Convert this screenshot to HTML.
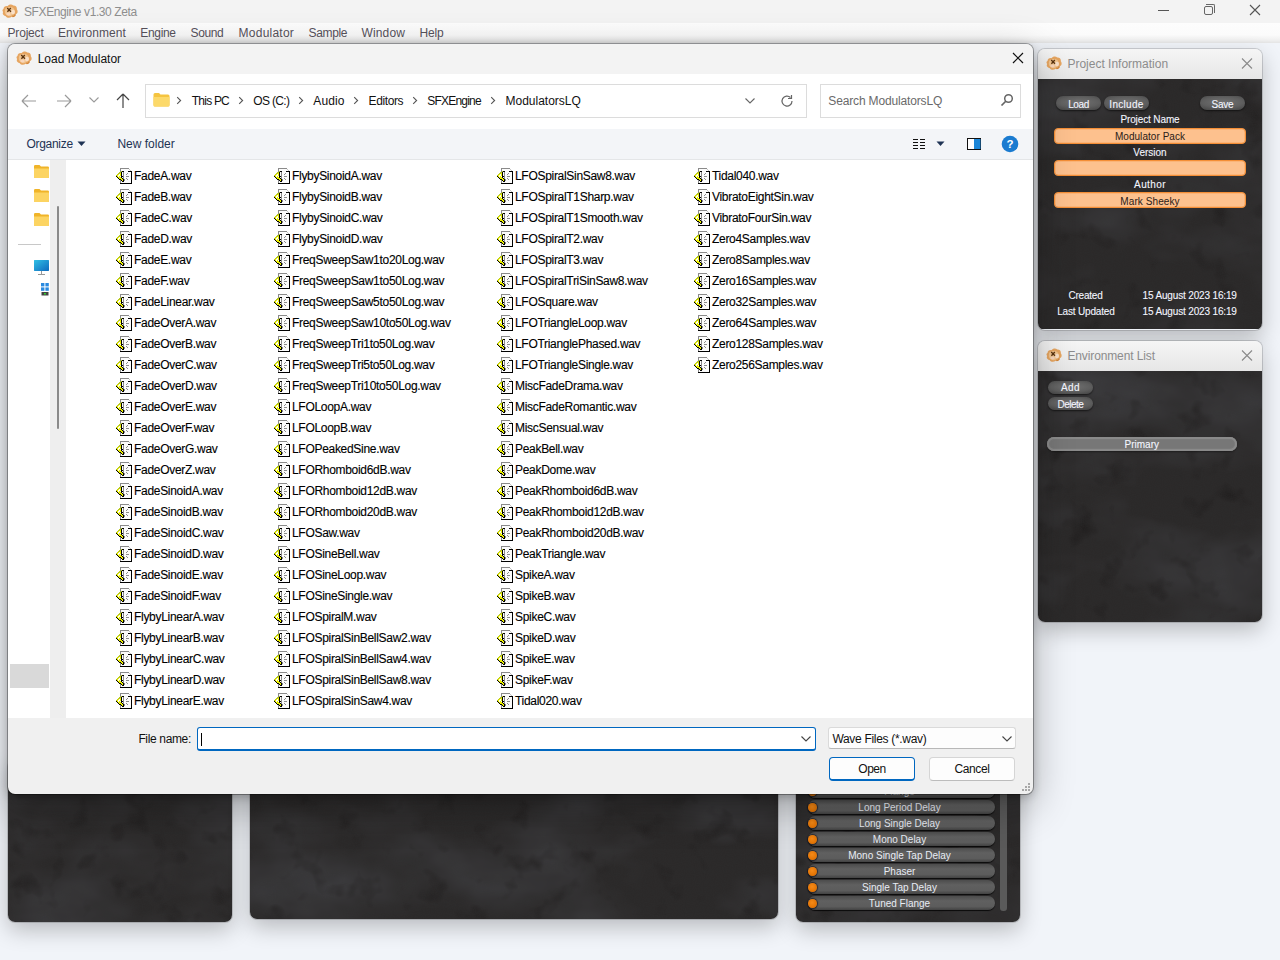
<!DOCTYPE html>
<html><head><meta charset="utf-8">
<style>
*{margin:0;padding:0;box-sizing:border-box}
html,body{width:1280px;height:960px;overflow:hidden}
body{position:relative;background:#f1f4f9;font-family:"Liberation Sans",sans-serif;}
.a{position:absolute}
.t{position:absolute;white-space:nowrap;line-height:1}
#tb{left:0;top:0;width:1280px;height:23px;background:#f3f3f3}
#mb{left:0;top:23px;width:1280px;height:20px;background:linear-gradient(#fdfdfd,#fbfbfb 60%,#f0f0f0 85%,#e4e4e4)}
.menu{font-size:12px;color:#57525c;top:27px}
.marble{background:
 radial-gradient(ellipse 60% 40% at 30% 70%, rgba(80,80,85,.35), transparent 70%),
 radial-gradient(ellipse 50% 30% at 70% 30%, rgba(70,70,72,.3), transparent 70%),
 radial-gradient(ellipse 40% 50% at 85% 80%, rgba(60,60,62,.3), transparent 70%),
 linear-gradient(160deg,#262424,#2c2b2b 40%,#333334 60%,#2a2828);}
.panel{position:absolute;border-radius:7px;overflow:hidden;box-shadow:0 8px 22px rgba(0,0,0,.24),0 0 0 1px rgba(0,0,0,.15)}
.phead{position:absolute;left:0;top:0;right:0;height:30px;background:linear-gradient(#f5f5f5,#e6e6e6)}
.pbody{position:absolute;left:0;top:30px;right:0;bottom:0}
.ptitle{font-size:12px;color:#8c8c8c}
.gbtn{position:absolute;border-radius:8px;background:radial-gradient(ellipse 75% 65% at 50% 45%,#727272,#5e5e5e 60%,#464646);box-shadow:0 1px 2px rgba(0,0,0,.6)}
.wl{position:absolute;white-space:nowrap;line-height:1;color:#f4f6ff;font-size:10px;-webkit-text-stroke:0.1px #f4f6ff}
.ofield{position:absolute;height:16px;border-radius:4px;background:#fdc18e;border:1px solid #f48e36;box-shadow:inset 0 0 0 0.5px #f9a860}
.dk{position:absolute;white-space:nowrap;line-height:1;color:#2a2018;font-size:10px}
.crumb{top:95px;font-size:12px;color:#111}
.chev{position:absolute}
.fxrow{position:absolute;left:805px;width:192px;height:16px}
.fxdot{position:absolute;left:2.5px;top:4px;width:9px;height:9px;border-radius:50%;background:radial-gradient(circle at 45% 40%,#f58a18,#e07000 75%,#5a3000);box-shadow:0 0 1px 1px rgba(20,20,30,.7)}
.fxpill{position:absolute;left:3px;top:1px;width:187px;height:14px;border-radius:7px;background:linear-gradient(#4c4c4c,#606060 35%,#5c5c5c 75%,#424242);box-shadow:0 1px 1px rgba(0,0,0,.8)}
.fxt{position:absolute;left:1px;width:187px;top:4px;text-align:center;white-space:nowrap;line-height:1;color:#e8ecf4;font-size:10px}
.fi{position:absolute;height:21px;font-size:12px;color:#000;white-space:nowrap;-webkit-text-stroke:0.12px #000}
.fi svg{position:absolute;left:0;top:2px;width:16px;height:16px}
.fi span{position:absolute;left:18px;top:4px;line-height:1;letter-spacing:-0.3px}
</style></head><body>
<svg width="0" height="0" style="position:absolute">
 <defs>
  <symbol id="wav" viewBox="0 0 16 16" shape-rendering="crispEdges"><rect x="4" y="0" width="9" height="1" fill="#8a8a8a"/><rect x="4" y="1" width="1" height="1" fill="#8a8a8a"/><rect x="5" y="1" width="8" height="1" fill="#fcfcfc"/><rect x="13" y="1" width="1" height="1" fill="#c4c4c4"/><rect x="4" y="2" width="1" height="1" fill="#8a8a8a"/><rect x="5" y="2" width="9" height="1" fill="#fcfcfc"/><rect x="14" y="2" width="1" height="1" fill="#c4c4c4"/><rect x="4" y="3" width="1" height="1" fill="#8a8a8a"/><rect x="5" y="3" width="1" height="1" fill="#b8c820"/><rect x="6" y="3" width="2" height="1" fill="#000"/><rect x="8" y="3" width="4" height="1" fill="#fcfcfc"/><rect x="12" y="3" width="4" height="1" fill="#000"/><rect x="3" y="4" width="2" height="1" fill="#b8c820"/><rect x="5" y="4" width="1" height="1" fill="#000"/><rect x="6" y="4" width="1" height="1" fill="#fcfcfc"/><rect x="7" y="4" width="1" height="1" fill="#8a8a8a"/><rect x="8" y="4" width="7" height="1" fill="#fcfcfc"/><rect x="15" y="4" width="1" height="1" fill="#000"/><rect x="2" y="5" width="2" height="1" fill="#b8c820"/><rect x="4" y="5" width="1" height="1" fill="#ecf000"/><rect x="5" y="5" width="1" height="1" fill="#000"/><rect x="6" y="5" width="1" height="1" fill="#fcfcfc"/><rect x="7" y="5" width="1" height="1" fill="#8a8a8a"/><rect x="8" y="5" width="3" height="1" fill="#fcfcfc"/><rect x="11" y="5" width="1" height="1" fill="#8a8a8a"/><rect x="12" y="5" width="3" height="1" fill="#fcfcfc"/><rect x="15" y="5" width="1" height="1" fill="#000"/><rect x="1" y="6" width="1" height="1" fill="#b8c820"/><rect x="2" y="6" width="1" height="1" fill="#ecf000"/><rect x="3" y="6" width="1" height="1" fill="#fcfcfc"/><rect x="4" y="6" width="1" height="1" fill="#ecf000"/><rect x="5" y="6" width="1" height="1" fill="#000"/><rect x="6" y="6" width="1" height="1" fill="#fcfcfc"/><rect x="7" y="6" width="1" height="1" fill="#8a8a8a"/><rect x="8" y="6" width="2" height="1" fill="#fcfcfc"/><rect x="10" y="6" width="1" height="1" fill="#8a8a8a"/><rect x="11" y="6" width="4" height="1" fill="#fcfcfc"/><rect x="15" y="6" width="1" height="1" fill="#000"/><rect x="0" y="7" width="1" height="1" fill="#b8c820"/><rect x="1" y="7" width="1" height="1" fill="#ecf000"/><rect x="2" y="7" width="2" height="1" fill="#fcfcfc"/><rect x="4" y="7" width="1" height="1" fill="#ecf000"/><rect x="5" y="7" width="1" height="1" fill="#000"/><rect x="6" y="7" width="1" height="1" fill="#fcfcfc"/><rect x="7" y="7" width="1" height="1" fill="#8a8a8a"/><rect x="8" y="7" width="7" height="1" fill="#fcfcfc"/><rect x="15" y="7" width="1" height="1" fill="#000"/><rect x="0" y="8" width="1" height="1" fill="#000"/><rect x="1" y="8" width="1" height="1" fill="#ecf000"/><rect x="2" y="8" width="1" height="1" fill="#fcfcfc"/><rect x="3" y="8" width="1" height="1" fill="#ecf000"/><rect x="4" y="8" width="1" height="1" fill="#fcfcfc"/><rect x="5" y="8" width="2" height="1" fill="#000"/><rect x="7" y="8" width="1" height="1" fill="#8a8a8a"/><rect x="8" y="8" width="2" height="1" fill="#fcfcfc"/><rect x="10" y="8" width="3" height="1" fill="#8a8a8a"/><rect x="13" y="8" width="2" height="1" fill="#fcfcfc"/><rect x="15" y="8" width="1" height="1" fill="#000"/><rect x="1" y="9" width="1" height="1" fill="#000"/><rect x="2" y="9" width="3" height="1" fill="#ecf000"/><rect x="5" y="9" width="1" height="1" fill="#000"/><rect x="6" y="9" width="1" height="1" fill="#fcfcfc"/><rect x="7" y="9" width="1" height="1" fill="#8a8a8a"/><rect x="8" y="9" width="7" height="1" fill="#fcfcfc"/><rect x="15" y="9" width="1" height="1" fill="#000"/><rect x="2" y="10" width="1" height="1" fill="#000"/><rect x="3" y="10" width="3" height="1" fill="#ecf000"/><rect x="6" y="10" width="1" height="1" fill="#000"/><rect x="7" y="10" width="1" height="1" fill="#8a8a8a"/><rect x="8" y="10" width="2" height="1" fill="#fcfcfc"/><rect x="10" y="10" width="1" height="1" fill="#8a8a8a"/><rect x="11" y="10" width="4" height="1" fill="#fcfcfc"/><rect x="15" y="10" width="1" height="1" fill="#000"/><rect x="3" y="11" width="2" height="1" fill="#000"/><rect x="5" y="11" width="2" height="1" fill="#ecf000"/><rect x="7" y="11" width="1" height="1" fill="#000"/><rect x="8" y="11" width="1" height="1" fill="#8a8a8a"/><rect x="9" y="11" width="2" height="1" fill="#fcfcfc"/><rect x="11" y="11" width="1" height="1" fill="#8a8a8a"/><rect x="12" y="11" width="3" height="1" fill="#fcfcfc"/><rect x="15" y="11" width="1" height="1" fill="#000"/><rect x="4" y="12" width="1" height="1" fill="#8a8a8a"/><rect x="5" y="12" width="1" height="1" fill="#000"/><rect x="6" y="12" width="1" height="1" fill="#ecf000"/><rect x="7" y="12" width="1" height="1" fill="#000"/><rect x="8" y="12" width="1" height="1" fill="#8a8a8a"/><rect x="9" y="12" width="6" height="1" fill="#fcfcfc"/><rect x="15" y="12" width="1" height="1" fill="#000"/><rect x="4" y="13" width="1" height="1" fill="#8a8a8a"/><rect x="5" y="13" width="1" height="1" fill="#fcfcfc"/><rect x="6" y="13" width="2" height="1" fill="#000"/><rect x="8" y="13" width="7" height="1" fill="#fcfcfc"/><rect x="15" y="13" width="1" height="1" fill="#000"/><rect x="4" y="14" width="1" height="1" fill="#8a8a8a"/><rect x="5" y="14" width="10" height="1" fill="#fcfcfc"/><rect x="15" y="14" width="1" height="1" fill="#000"/><rect x="4" y="15" width="12" height="1" fill="#000"/></symbol>
  <symbol id="logo" viewBox="0 0 16 14">
   <path d="M1.5 5C1.5 3 3.5 1.8 5.5 2.2C6.8 0.2 10 0 11.2 1.6C13.2 1.2 15.2 2.8 14.8 5.2C16.2 6.8 15.8 9.5 13.8 10.2C13.8 12.6 11.2 13.8 9.6 12.8C8 14.2 4.8 14.2 3.8 12.2C1.2 12 0 9.5 1.2 8C0 6.8 0.5 5.5 1.5 5Z" fill="#e6a560"/>
   <path d="M3 6C3 4 5 3 7 3.2C9 2.5 12 3.5 12.5 6C13.5 8 12.5 10.5 10.5 11C9 12.5 6 12.5 4.5 11C3 10 2.5 8 3 6Z" fill="#f2c590"/>
   <ellipse cx="11" cy="8" rx="2" ry="2.2" fill="#f9e0c8"/>
   <ellipse cx="6.5" cy="10" rx="2.2" ry="1.4" fill="#f8d6bc"/>
   <path d="M13 10.5C13.5 11.5 12 12.8 10.5 12.3" stroke="#c87a30" stroke-width="1" fill="none"/>
   <path d="M5.2 4L9 7.8M8.8 4L5.4 7.8" stroke="#5a3410" stroke-width="1.3"/>
  </symbol>
  <symbol id="fold" viewBox="0 0 15 13"><path d="M0 1.2Q0 0 1.2 0H5.5L7 1.5H13.8Q15 1.5 15 2.7V11.8Q15 13 13.8 13H1.2Q0 13 0 11.8Z" fill="#f0b429"/><path d="M0 3.5H15V11.8Q15 13 13.8 13H1.2Q0 13 0 11.8Z" fill="#fcd462"/></symbol>
  <linearGradient id="mon" x1="0" y1="0" x2="1" y2="1"><stop offset="0" stop-color="#35c8e8" stop-opacity=".8"/><stop offset="1" stop-color="#0a5cb8" stop-opacity=".8"/></linearGradient>
  <symbol id="chev" viewBox="0 0 6 9"><path d="M1.2 1.2L4.6 4.5L1.2 7.8" fill="none" stroke="#555" stroke-width="1.1"/></symbol>
  <filter id="mf1" x="0" y="0" width="100%" height="100%" color-interpolation-filters="sRGB">
   <feTurbulence type="fractalNoise" baseFrequency="0.008 0.013" numOctaves="4" seed="1" result="n"/>
   <feColorMatrix in="n" type="matrix" values="0 0 0 0 0.26  0 0 0 0 0.26  0 0 0 0 0.275  1.5 0 0 0 -0.62" result="c"/>
   <feTurbulence type="fractalNoise" baseFrequency="0.035" numOctaves="3" seed="4" result="n2"/>
   <feColorMatrix in="n2" type="matrix" values="0 0 0 0 0.11  0 0 0 0 0.10  0 0 0 0 0.10  -2.0 0 0 0 0.85" result="c2"/>
   <feTurbulence type="fractalNoise" baseFrequency="0.9" numOctaves="1" seed="2" result="g"/>
   <feColorMatrix in="g" type="matrix" values="0 0 0 0 0.2  0 0 0 0 0.2  0 0 0 0 0.2  0 0 0 0.4 -0.05" result="gc"/>
   <feFlood flood-color="#2a2828" result="base"/>
   <feComposite in="c" in2="base" operator="over" result="m1"/>
   <feComposite in="c2" in2="m1" operator="over" result="m2"/>
   <feComposite in="gc" in2="m2" operator="over"/>
  </filter>
  <filter id="mf2" x="0" y="0" width="100%" height="100%" color-interpolation-filters="sRGB">
   <feTurbulence type="fractalNoise" baseFrequency="0.008 0.013" numOctaves="4" seed="2" result="n"/>
   <feColorMatrix in="n" type="matrix" values="0 0 0 0 0.26  0 0 0 0 0.26  0 0 0 0 0.275  1.5 0 0 0 -0.62" result="c"/>
   <feTurbulence type="fractalNoise" baseFrequency="0.035" numOctaves="3" seed="7" result="n2"/>
   <feColorMatrix in="n2" type="matrix" values="0 0 0 0 0.11  0 0 0 0 0.10  0 0 0 0 0.10  -2.0 0 0 0 0.85" result="c2"/>
   <feTurbulence type="fractalNoise" baseFrequency="0.9" numOctaves="1" seed="2" result="g"/>
   <feColorMatrix in="g" type="matrix" values="0 0 0 0 0.2  0 0 0 0 0.2  0 0 0 0 0.2  0 0 0 0.4 -0.05" result="gc"/>
   <feFlood flood-color="#2a2828" result="base"/>
   <feComposite in="c" in2="base" operator="over" result="m1"/>
   <feComposite in="c2" in2="m1" operator="over" result="m2"/>
   <feComposite in="gc" in2="m2" operator="over"/>
  </filter>
  <filter id="mf3" x="0" y="0" width="100%" height="100%" color-interpolation-filters="sRGB">
   <feTurbulence type="fractalNoise" baseFrequency="0.008 0.013" numOctaves="4" seed="3" result="n"/>
   <feColorMatrix in="n" type="matrix" values="0 0 0 0 0.26  0 0 0 0 0.26  0 0 0 0 0.275  1.5 0 0 0 -0.62" result="c"/>
   <feTurbulence type="fractalNoise" baseFrequency="0.035" numOctaves="3" seed="10" result="n2"/>
   <feColorMatrix in="n2" type="matrix" values="0 0 0 0 0.11  0 0 0 0 0.10  0 0 0 0 0.10  -2.0 0 0 0 0.85" result="c2"/>
   <feTurbulence type="fractalNoise" baseFrequency="0.9" numOctaves="1" seed="2" result="g"/>
   <feColorMatrix in="g" type="matrix" values="0 0 0 0 0.2  0 0 0 0 0.2  0 0 0 0 0.2  0 0 0 0.4 -0.05" result="gc"/>
   <feFlood flood-color="#2a2828" result="base"/>
   <feComposite in="c" in2="base" operator="over" result="m1"/>
   <feComposite in="c2" in2="m1" operator="over" result="m2"/>
   <feComposite in="gc" in2="m2" operator="over"/>
  </filter>
  <filter id="mf4" x="0" y="0" width="100%" height="100%" color-interpolation-filters="sRGB">
   <feTurbulence type="fractalNoise" baseFrequency="0.008 0.013" numOctaves="4" seed="4" result="n"/>
   <feColorMatrix in="n" type="matrix" values="0 0 0 0 0.26  0 0 0 0 0.26  0 0 0 0 0.275  1.5 0 0 0 -0.62" result="c"/>
   <feTurbulence type="fractalNoise" baseFrequency="0.035" numOctaves="3" seed="13" result="n2"/>
   <feColorMatrix in="n2" type="matrix" values="0 0 0 0 0.11  0 0 0 0 0.10  0 0 0 0 0.10  -2.0 0 0 0 0.85" result="c2"/>
   <feTurbulence type="fractalNoise" baseFrequency="0.9" numOctaves="1" seed="2" result="g"/>
   <feColorMatrix in="g" type="matrix" values="0 0 0 0 0.2  0 0 0 0 0.2  0 0 0 0 0.2  0 0 0 0.4 -0.05" result="gc"/>
   <feFlood flood-color="#2a2828" result="base"/>
   <feComposite in="c" in2="base" operator="over" result="m1"/>
   <feComposite in="c2" in2="m1" operator="over" result="m2"/>
   <feComposite in="gc" in2="m2" operator="over"/>
  </filter>
  <filter id="mf5" x="0" y="0" width="100%" height="100%" color-interpolation-filters="sRGB">
   <feTurbulence type="fractalNoise" baseFrequency="0.008 0.013" numOctaves="4" seed="5" result="n"/>
   <feColorMatrix in="n" type="matrix" values="0 0 0 0 0.26  0 0 0 0 0.26  0 0 0 0 0.275  1.5 0 0 0 -0.62" result="c"/>
   <feTurbulence type="fractalNoise" baseFrequency="0.035" numOctaves="3" seed="16" result="n2"/>
   <feColorMatrix in="n2" type="matrix" values="0 0 0 0 0.11  0 0 0 0 0.10  0 0 0 0 0.10  -2.0 0 0 0 0.85" result="c2"/>
   <feTurbulence type="fractalNoise" baseFrequency="0.9" numOctaves="1" seed="2" result="g"/>
   <feColorMatrix in="g" type="matrix" values="0 0 0 0 0.2  0 0 0 0 0.2  0 0 0 0 0.2  0 0 0 0.4 -0.05" result="gc"/>
   <feFlood flood-color="#2a2828" result="base"/>
   <feComposite in="c" in2="base" operator="over" result="m1"/>
   <feComposite in="c2" in2="m1" operator="over" result="m2"/>
   <feComposite in="gc" in2="m2" operator="over"/>
  </filter>
 </defs>
</svg>
<div id="tb" class="a"></div>
<svg class="a" style="left:2px;top:4px;width:16px;height:14px"><use href="#logo"/></svg>
<div class="t" style="left:24px;top:5.8px;font-size:12px;color:#8e8e8e;letter-spacing:-0.4px">SFXEngine v1.30 Zeta</div>
<div class="a" style="left:1158px;top:10px;width:11px;height:1px;background:#555"></div>
<div class="a" style="left:1204px;top:6px;width:9px;height:9px;border:1px solid #666;border-radius:2px"></div>
<div class="a" style="left:1206px;top:4px;width:9px;height:9px;border-top:1px solid #666;border-right:1px solid #666;border-radius:0 2px 0 0"></div>
<svg class="a" style="left:1249px;top:4px;width:12px;height:12px"><path d="M1 1L11 11M11 1L1 11" stroke="#555" stroke-width="1.1"/></svg>
<div id="mb" class="a"></div>
<div class="t menu" style="left:7.5px;top:27.0px;letter-spacing:-0.18px">Project</div>
<div class="t menu" style="left:58px;top:27.0px;letter-spacing:0.04px">Environment</div>
<div class="t menu" style="left:140.3px;top:27.0px;letter-spacing:-0.33px">Engine</div>
<div class="t menu" style="left:190.5px;top:27.0px;letter-spacing:-0.36px">Sound</div>
<div class="t menu" style="left:238.6px;top:27.0px;letter-spacing:0.23px">Modulator</div>
<div class="t menu" style="left:308.6px;top:27.0px;letter-spacing:-0.38px">Sample</div>
<div class="t menu" style="left:361.6px;top:27.0px;letter-spacing:0.12px">Window</div>
<div class="t menu" style="left:419.5px;top:27.0px;letter-spacing:-0.2px">Help</div>
<div class="panel" style="left:8px;top:760px;width:224px;height:162px"><svg width="224" height="162" style="position:absolute;left:0;top:0;display:block"><rect width="224" height="162" filter="url(#mf1)"/></svg></div>
<div class="panel" style="left:250px;top:760px;width:528px;height:159px"><svg width="528" height="159" style="position:absolute;left:0;top:0;display:block"><rect width="528" height="159" filter="url(#mf2)"/></svg></div>
<div class="panel" style="left:796px;top:760px;width:224px;height:162px"><svg width="224" height="162" style="position:absolute;left:0;top:0;display:block"><rect width="224" height="162" filter="url(#mf3)"/></svg></div>
<div class="fxrow" style="top:783px"><div class="fxpill"></div><div class="fxdot"></div><div class="fxt">Flange</div></div>
<div class="fxrow" style="top:799px"><div class="fxpill"></div><div class="fxdot"></div><div class="fxt">Long Period Delay</div></div>
<div class="fxrow" style="top:815px"><div class="fxpill"></div><div class="fxdot"></div><div class="fxt">Long Single Delay</div></div>
<div class="fxrow" style="top:831px"><div class="fxpill"></div><div class="fxdot"></div><div class="fxt">Mono Delay</div></div>
<div class="fxrow" style="top:847px"><div class="fxpill"></div><div class="fxdot"></div><div class="fxt">Mono Single Tap Delay</div></div>
<div class="fxrow" style="top:863px"><div class="fxpill"></div><div class="fxdot"></div><div class="fxt">Phaser</div></div>
<div class="fxrow" style="top:879px"><div class="fxpill"></div><div class="fxdot"></div><div class="fxt">Single Tap Delay</div></div>
<div class="fxrow" style="top:895px"><div class="fxpill"></div><div class="fxdot"></div><div class="fxt">Tuned Flange</div></div>
<div class="a" style="left:1000px;top:790px;width:7px;height:121px;background:#5a5a5a;border-radius:3px"></div>
<div class="panel" style="left:1038px;top:49px;width:224px;height:281px"><div class="phead"></div><div class="pbody"><svg width="224" height="250" style="position:absolute;left:0;top:0;display:block"><rect width="224" height="250" filter="url(#mf4)"/></svg></div></div>
<svg class="a" style="left:1046px;top:56px;width:16px;height:14px"><use href="#logo"/></svg>
<div class="t ptitle" style="left:1067.4px;top:57.7px">Project Information</div>
<svg class="a" style="left:1241px;top:58px;width:12px;height:11px"><path d="M1 0.5L11 10.5M11 0.5L1 10.5" stroke="#8a8a8a" stroke-width="1.1"/></svg>
<div class="gbtn" style="left:1056px;top:96.3px;width:45px;height:14px"></div>
<div class="wl" style="left:1056px;width:45px;text-align:center;top:99.6px;letter-spacing:-0.4px">Load</div>
<div class="gbtn" style="left:1104px;top:96.3px;width:45px;height:14px"></div>
<div class="wl" style="left:1104px;width:45px;text-align:center;top:99.6px;letter-spacing:0.3px">Include</div>
<div class="gbtn" style="left:1199.5px;top:96.3px;width:45.799999999999955px;height:14px"></div>
<div class="wl" style="left:1199.5px;width:45.799999999999955px;text-align:center;top:99.6px;letter-spacing:-0.27px">Save</div>
<div class="wl" style="left:1054px;width:192px;text-align:center;top:115.4px;letter-spacing:-0.12px">Project Name</div>
<div class="wl" style="left:1054px;width:192px;text-align:center;top:147.7px;letter-spacing:0px">Version</div>
<div class="wl" style="left:1054px;width:192px;text-align:center;top:179.5px;letter-spacing:0.4px">Author</div>
<div class="ofield" style="left:1054px;top:128px;width:192px"></div>
<div class="dk" style="left:1054px;width:192px;text-align:center;top:132.3px;letter-spacing:0.05px">Modulator Pack</div>
<div class="ofield" style="left:1054px;top:160px;width:192px"></div>
<div class="ofield" style="left:1054px;top:192px;width:192px"></div>
<div class="dk" style="left:1054px;width:192px;text-align:center;top:196.7px;letter-spacing:0.09px">Mark Sheeky</div>
<div class="wl" style="left:1068.4px;top:291.4px;letter-spacing:-0.2px">Created</div>
<div class="wl" style="left:1057.2px;top:306.9px;letter-spacing:-0.17px">Last Updated</div>
<div class="wl" style="left:1142.6px;top:291.4px;letter-spacing:-0.16px">15 August 2023 16:19</div>
<div class="wl" style="left:1142.6px;top:306.9px;letter-spacing:-0.16px">15 August 2023 16:19</div>
<div class="panel" style="left:1038px;top:341px;width:224px;height:281px"><div class="phead"></div><div class="pbody"><svg width="224" height="251" style="position:absolute;left:0;top:0;display:block"><rect width="224" height="251" filter="url(#mf5)"/></svg></div></div>
<svg class="a" style="left:1046px;top:348px;width:16px;height:14px"><use href="#logo"/></svg>
<div class="t ptitle" style="left:1067.4px;top:349.5px;letter-spacing:-0.12px">Environment List</div>
<svg class="a" style="left:1241px;top:350px;width:12px;height:11px"><path d="M1 0.5L11 10.5M11 0.5L1 10.5" stroke="#8a8a8a" stroke-width="1.1"/></svg>
<div class="gbtn" style="left:1047.7px;top:380.6px;width:45.4px;height:13.4px"></div>
<div class="wl" style="left:1047.7px;width:45.4px;text-align:center;top:383.3px;letter-spacing:0.35px">Add</div>
<div class="gbtn" style="left:1047.7px;top:396.7px;width:45.4px;height:13.3px"></div>
<div class="wl" style="left:1047.7px;width:45.4px;text-align:center;top:399.5px;letter-spacing:-0.5px">Delete</div>
<div class="gbtn" style="left:1046.8px;top:436.6px;width:190px;height:14.8px;background:#777;box-shadow:inset 0 0 0 2px #8a8a8a,inset 0 0 1px 3px #7a7a7a,0 1px 2px rgba(0,0,0,.4)"></div>
<div class="wl" style="left:1046.8px;width:190px;text-align:center;top:439.5px">Primary</div>
<div class="a" style="left:8px;top:44px;width:1025px;height:750px;background:#f0f0f0;border-radius:7px;box-shadow:0 0 0 1px rgba(0,0,0,.32),0 2px 10px rgba(0,0,0,.22),0 12px 40px rgba(0,0,0,.30)"></div>
<div class="a" style="left:8px;top:44px;width:1025px;height:30px;background:#f3f3f3;border-radius:7px 7px 0 0"></div>
<svg class="a" style="left:16px;top:51px;width:16px;height:14px"><use href="#logo"/></svg>
<div class="t" style="left:37.7px;top:52.8px;font-size:12px;color:#111">Load Modulator</div>
<svg class="a" style="left:1012px;top:52px;width:12px;height:12px"><path d="M1 1L11 11M11 1L1 11" stroke="#111" stroke-width="1.2"/></svg>
<div class="a" style="left:8px;top:74px;width:1025px;height:55px;background:#fff"></div>
<svg class="a" style="left:20px;top:93px;width:18px;height:16px"><path d="M2 8H16M2 8L8 2M2 8L8 14" fill="none" stroke="#9a9a9a" stroke-width="1.2"/></svg>
<svg class="a" style="left:55px;top:93px;width:18px;height:16px"><path d="M16 8H2M16 8L10 2M16 8L10 14" fill="none" stroke="#9a9a9a" stroke-width="1.2"/></svg>
<svg class="a" style="left:88px;top:96px;width:12px;height:8px"><path d="M1.5 1.5L6 6L10.5 1.5" fill="none" stroke="#9a9a9a" stroke-width="1.1"/></svg>
<svg class="a" style="left:115px;top:92px;width:16px;height:18px"><path d="M8 2V16M8 2L2 8M8 2L14 8" fill="none" stroke="#444" stroke-width="1.2"/></svg>
<div class="a" style="left:145px;top:84px;width:662px;height:34px;border:1px solid #dcdcdc;background:#fff"></div>
<svg class="a" style="left:153px;top:92px;width:17px;height:15px"><path d="M0.5 2.5Q0.5 1 2 1H6L7.5 2.5H15Q16.5 2.5 16.5 4V13Q16.5 14.5 15 14.5H2Q0.5 14.5 0.5 13Z" fill="#f5c440"/><path d="M0.5 5H16.5V13Q16.5 14.5 15 14.5H2Q0.5 14.5 0.5 13Z" fill="#fcd96a"/></svg>
<div class="t crumb" style="left:191.8px;top:95.0px;letter-spacing:-0.78px">This PC</div>
<div class="t crumb" style="left:253.3px;top:95.0px;letter-spacing:-0.68px">OS (C:)</div>
<div class="t crumb" style="left:313.3px;top:95.0px;letter-spacing:0.12px">Audio</div>
<div class="t crumb" style="left:368.6px;top:95.0px;letter-spacing:-0.4px">Editors</div>
<div class="t crumb" style="left:427.3px;top:95.0px;letter-spacing:-0.8px">SFXEngine</div>
<div class="t crumb" style="left:505.5px;top:95.0px;letter-spacing:0px">ModulatorsLQ</div>
<svg class="chev" style="left:176px;top:96px;width:6px;height:9px"><use href="#chev"/></svg>
<svg class="chev" style="left:237.6px;top:96px;width:6px;height:9px"><use href="#chev"/></svg>
<svg class="chev" style="left:297.8px;top:96px;width:6px;height:9px"><use href="#chev"/></svg>
<svg class="chev" style="left:353px;top:96px;width:6px;height:9px"><use href="#chev"/></svg>
<svg class="chev" style="left:411.8px;top:96px;width:6px;height:9px"><use href="#chev"/></svg>
<svg class="chev" style="left:490px;top:96px;width:6px;height:9px"><use href="#chev"/></svg>
<svg class="a" style="left:744px;top:97px;width:12px;height:8px"><path d="M1.5 1.5L6 6L10.5 1.5" fill="none" stroke="#666" stroke-width="1.1"/></svg>
<svg class="a" style="left:779px;top:93px;width:16px;height:16px"><path d="M13 8A5 5 0 1 1 11.5 4.5" fill="none" stroke="#666" stroke-width="1.2"/><path d="M12.5 2V5.5H9" fill="none" stroke="#666" stroke-width="1.2"/></svg>
<div class="a" style="left:819.5px;top:84px;width:201px;height:34px;border:1px solid #dcdcdc;background:#fff"></div>
<div class="t" style="left:828.3px;top:95.3px;font-size:12px;color:#6a6a6a;letter-spacing:-0.15px">Search ModulatorsLQ</div>
<svg class="a" style="left:1000px;top:93px;width:14px;height:14px"><circle cx="8.5" cy="5.5" r="3.8" fill="none" stroke="#666" stroke-width="1.5"/><path d="M6 8L1.5 12.5" stroke="#666" stroke-width="1.7"/></svg>
<div class="a" style="left:8px;top:129px;width:1025px;height:31px;background:#f3f5f8;border-bottom:1px solid #e4e6e8"></div>
<div class="t" style="left:26.4px;top:138.0px;font-size:12px;color:#1e3354;letter-spacing:-0.29px">Organize</div>
<svg class="a" style="left:77px;top:141px;width:9px;height:6px"><path d="M0.5 0.5H8.5L4.5 5Z" fill="#1e3354"/></svg>
<div class="t" style="left:117.4px;top:138.0px;font-size:12px;color:#1e3354">New folder</div>
<svg class="a" style="left:912px;top:138px;width:14px;height:12px"><path d="M1 1.5H6M1 4.5H6M1 7.5H6M1 10.5H6M8 1.5H13M8 4.5H13M8 7.5H13M8 10.5H13" stroke="#111" stroke-width="1"/></svg>
<svg class="a" style="left:936px;top:141px;width:9px;height:6px"><path d="M0.5 0.5H8.5L4.5 5Z" fill="#1e3354"/></svg>
<svg class="a" style="left:967px;top:138px;width:14px;height:12px"><rect x="0.5" y="0.5" width="13" height="11" fill="#fff" stroke="#111"/><rect x="7" y="1" width="6.5" height="10" fill="#1c86d8"/></svg>
<svg class="a" style="left:1001px;top:135px;width:18px;height:18px"><circle cx="9" cy="9" r="8.3" fill="#1a7bd0"/><text x="9" y="13.2" font-family="Liberation Sans" font-size="11.5" font-weight="bold" fill="#fff" text-anchor="middle">?</text></svg>
<div class="a" style="left:8px;top:160px;width:1025px;height:558px;background:#fff"></div>
<div class="a" style="left:50px;top:160px;width:16px;height:558px;background:#eeeeee"></div>
<div class="a" style="left:57px;top:206px;width:2px;height:223px;background:#8a8a8a;border-radius:1px"></div>
<div class="a" style="left:10px;top:664px;width:39px;height:24px;background:#d9d9d9"></div>
<svg class="a" style="left:34px;top:165px;width:15px;height:13px"><use href="#fold"/></svg>
<svg class="a" style="left:34px;top:189px;width:15px;height:13px"><use href="#fold"/></svg>
<svg class="a" style="left:34px;top:213px;width:15px;height:13px"><use href="#fold"/></svg>
<div class="a" style="left:18px;top:244px;width:23px;height:1px;background:#c8c8c8"></div>
<svg class="a" style="left:34px;top:260px;width:15px;height:16px"><rect x="0" y="0" width="15" height="11" rx="1" fill="#1fa0d8"/><rect x="0" y="0" width="15" height="11" rx="1" fill="url(#mon)"/><path d="M7.5 11V14M4 14.5H11" stroke="#999" stroke-width="1"/></svg>
<svg class="a" style="left:41px;top:283px;width:8px;height:13px"><rect x="0" y="0" width="3.4" height="3.4" fill="#2a8ae0"/><rect x="4.4" y="0" width="3.4" height="3.4" fill="#2a8ae0"/><rect x="0" y="4.4" width="3.4" height="3.4" fill="#2a8ae0"/><rect x="4.4" y="4.4" width="3.4" height="3.4" fill="#2a8ae0"/><rect x="0.5" y="9" width="7" height="3.5" fill="#444"/><rect x="3" y="10" width="2" height="1.5" fill="#3c3"/></svg>
<div class="fi" style="left:116px;top:166px"><svg><use href="#wav"/></svg><span>FadeA.wav</span></div>
<div class="fi" style="left:116px;top:187px"><svg><use href="#wav"/></svg><span>FadeB.wav</span></div>
<div class="fi" style="left:116px;top:208px"><svg><use href="#wav"/></svg><span>FadeC.wav</span></div>
<div class="fi" style="left:116px;top:229px"><svg><use href="#wav"/></svg><span>FadeD.wav</span></div>
<div class="fi" style="left:116px;top:250px"><svg><use href="#wav"/></svg><span>FadeE.wav</span></div>
<div class="fi" style="left:116px;top:271px"><svg><use href="#wav"/></svg><span>FadeF.wav</span></div>
<div class="fi" style="left:116px;top:292px"><svg><use href="#wav"/></svg><span>FadeLinear.wav</span></div>
<div class="fi" style="left:116px;top:313px"><svg><use href="#wav"/></svg><span>FadeOverA.wav</span></div>
<div class="fi" style="left:116px;top:334px"><svg><use href="#wav"/></svg><span>FadeOverB.wav</span></div>
<div class="fi" style="left:116px;top:355px"><svg><use href="#wav"/></svg><span>FadeOverC.wav</span></div>
<div class="fi" style="left:116px;top:376px"><svg><use href="#wav"/></svg><span>FadeOverD.wav</span></div>
<div class="fi" style="left:116px;top:397px"><svg><use href="#wav"/></svg><span>FadeOverE.wav</span></div>
<div class="fi" style="left:116px;top:418px"><svg><use href="#wav"/></svg><span>FadeOverF.wav</span></div>
<div class="fi" style="left:116px;top:439px"><svg><use href="#wav"/></svg><span>FadeOverG.wav</span></div>
<div class="fi" style="left:116px;top:460px"><svg><use href="#wav"/></svg><span>FadeOverZ.wav</span></div>
<div class="fi" style="left:116px;top:481px"><svg><use href="#wav"/></svg><span>FadeSinoidA.wav</span></div>
<div class="fi" style="left:116px;top:502px"><svg><use href="#wav"/></svg><span>FadeSinoidB.wav</span></div>
<div class="fi" style="left:116px;top:523px"><svg><use href="#wav"/></svg><span>FadeSinoidC.wav</span></div>
<div class="fi" style="left:116px;top:544px"><svg><use href="#wav"/></svg><span>FadeSinoidD.wav</span></div>
<div class="fi" style="left:116px;top:565px"><svg><use href="#wav"/></svg><span>FadeSinoidE.wav</span></div>
<div class="fi" style="left:116px;top:586px"><svg><use href="#wav"/></svg><span>FadeSinoidF.wav</span></div>
<div class="fi" style="left:116px;top:607px"><svg><use href="#wav"/></svg><span>FlybyLinearA.wav</span></div>
<div class="fi" style="left:116px;top:628px"><svg><use href="#wav"/></svg><span>FlybyLinearB.wav</span></div>
<div class="fi" style="left:116px;top:649px"><svg><use href="#wav"/></svg><span>FlybyLinearC.wav</span></div>
<div class="fi" style="left:116px;top:670px"><svg><use href="#wav"/></svg><span>FlybyLinearD.wav</span></div>
<div class="fi" style="left:116px;top:691px"><svg><use href="#wav"/></svg><span>FlybyLinearE.wav</span></div>
<div class="fi" style="left:274px;top:166px"><svg><use href="#wav"/></svg><span>FlybySinoidA.wav</span></div>
<div class="fi" style="left:274px;top:187px"><svg><use href="#wav"/></svg><span>FlybySinoidB.wav</span></div>
<div class="fi" style="left:274px;top:208px"><svg><use href="#wav"/></svg><span>FlybySinoidC.wav</span></div>
<div class="fi" style="left:274px;top:229px"><svg><use href="#wav"/></svg><span>FlybySinoidD.wav</span></div>
<div class="fi" style="left:274px;top:250px"><svg><use href="#wav"/></svg><span>FreqSweepSaw1to20Log.wav</span></div>
<div class="fi" style="left:274px;top:271px"><svg><use href="#wav"/></svg><span>FreqSweepSaw1to50Log.wav</span></div>
<div class="fi" style="left:274px;top:292px"><svg><use href="#wav"/></svg><span>FreqSweepSaw5to50Log.wav</span></div>
<div class="fi" style="left:274px;top:313px"><svg><use href="#wav"/></svg><span>FreqSweepSaw10to50Log.wav</span></div>
<div class="fi" style="left:274px;top:334px"><svg><use href="#wav"/></svg><span>FreqSweepTri1to50Log.wav</span></div>
<div class="fi" style="left:274px;top:355px"><svg><use href="#wav"/></svg><span>FreqSweepTri5to50Log.wav</span></div>
<div class="fi" style="left:274px;top:376px"><svg><use href="#wav"/></svg><span>FreqSweepTri10to50Log.wav</span></div>
<div class="fi" style="left:274px;top:397px"><svg><use href="#wav"/></svg><span>LFOLoopA.wav</span></div>
<div class="fi" style="left:274px;top:418px"><svg><use href="#wav"/></svg><span>LFOLoopB.wav</span></div>
<div class="fi" style="left:274px;top:439px"><svg><use href="#wav"/></svg><span>LFOPeakedSine.wav</span></div>
<div class="fi" style="left:274px;top:460px"><svg><use href="#wav"/></svg><span>LFORhomboid6dB.wav</span></div>
<div class="fi" style="left:274px;top:481px"><svg><use href="#wav"/></svg><span>LFORhomboid12dB.wav</span></div>
<div class="fi" style="left:274px;top:502px"><svg><use href="#wav"/></svg><span>LFORhomboid20dB.wav</span></div>
<div class="fi" style="left:274px;top:523px"><svg><use href="#wav"/></svg><span>LFOSaw.wav</span></div>
<div class="fi" style="left:274px;top:544px"><svg><use href="#wav"/></svg><span>LFOSineBell.wav</span></div>
<div class="fi" style="left:274px;top:565px"><svg><use href="#wav"/></svg><span>LFOSineLoop.wav</span></div>
<div class="fi" style="left:274px;top:586px"><svg><use href="#wav"/></svg><span>LFOSineSingle.wav</span></div>
<div class="fi" style="left:274px;top:607px"><svg><use href="#wav"/></svg><span>LFOSpiralM.wav</span></div>
<div class="fi" style="left:274px;top:628px"><svg><use href="#wav"/></svg><span>LFOSpiralSinBellSaw2.wav</span></div>
<div class="fi" style="left:274px;top:649px"><svg><use href="#wav"/></svg><span>LFOSpiralSinBellSaw4.wav</span></div>
<div class="fi" style="left:274px;top:670px"><svg><use href="#wav"/></svg><span>LFOSpiralSinBellSaw8.wav</span></div>
<div class="fi" style="left:274px;top:691px"><svg><use href="#wav"/></svg><span>LFOSpiralSinSaw4.wav</span></div>
<div class="fi" style="left:497px;top:166px"><svg><use href="#wav"/></svg><span>LFOSpiralSinSaw8.wav</span></div>
<div class="fi" style="left:497px;top:187px"><svg><use href="#wav"/></svg><span>LFOSpiralT1Sharp.wav</span></div>
<div class="fi" style="left:497px;top:208px"><svg><use href="#wav"/></svg><span>LFOSpiralT1Smooth.wav</span></div>
<div class="fi" style="left:497px;top:229px"><svg><use href="#wav"/></svg><span>LFOSpiralT2.wav</span></div>
<div class="fi" style="left:497px;top:250px"><svg><use href="#wav"/></svg><span>LFOSpiralT3.wav</span></div>
<div class="fi" style="left:497px;top:271px"><svg><use href="#wav"/></svg><span>LFOSpiralTriSinSaw8.wav</span></div>
<div class="fi" style="left:497px;top:292px"><svg><use href="#wav"/></svg><span>LFOSquare.wav</span></div>
<div class="fi" style="left:497px;top:313px"><svg><use href="#wav"/></svg><span>LFOTriangleLoop.wav</span></div>
<div class="fi" style="left:497px;top:334px"><svg><use href="#wav"/></svg><span>LFOTrianglePhased.wav</span></div>
<div class="fi" style="left:497px;top:355px"><svg><use href="#wav"/></svg><span>LFOTriangleSingle.wav</span></div>
<div class="fi" style="left:497px;top:376px"><svg><use href="#wav"/></svg><span>MiscFadeDrama.wav</span></div>
<div class="fi" style="left:497px;top:397px"><svg><use href="#wav"/></svg><span>MiscFadeRomantic.wav</span></div>
<div class="fi" style="left:497px;top:418px"><svg><use href="#wav"/></svg><span>MiscSensual.wav</span></div>
<div class="fi" style="left:497px;top:439px"><svg><use href="#wav"/></svg><span>PeakBell.wav</span></div>
<div class="fi" style="left:497px;top:460px"><svg><use href="#wav"/></svg><span>PeakDome.wav</span></div>
<div class="fi" style="left:497px;top:481px"><svg><use href="#wav"/></svg><span>PeakRhomboid6dB.wav</span></div>
<div class="fi" style="left:497px;top:502px"><svg><use href="#wav"/></svg><span>PeakRhomboid12dB.wav</span></div>
<div class="fi" style="left:497px;top:523px"><svg><use href="#wav"/></svg><span>PeakRhomboid20dB.wav</span></div>
<div class="fi" style="left:497px;top:544px"><svg><use href="#wav"/></svg><span>PeakTriangle.wav</span></div>
<div class="fi" style="left:497px;top:565px"><svg><use href="#wav"/></svg><span>SpikeA.wav</span></div>
<div class="fi" style="left:497px;top:586px"><svg><use href="#wav"/></svg><span>SpikeB.wav</span></div>
<div class="fi" style="left:497px;top:607px"><svg><use href="#wav"/></svg><span>SpikeC.wav</span></div>
<div class="fi" style="left:497px;top:628px"><svg><use href="#wav"/></svg><span>SpikeD.wav</span></div>
<div class="fi" style="left:497px;top:649px"><svg><use href="#wav"/></svg><span>SpikeE.wav</span></div>
<div class="fi" style="left:497px;top:670px"><svg><use href="#wav"/></svg><span>SpikeF.wav</span></div>
<div class="fi" style="left:497px;top:691px"><svg><use href="#wav"/></svg><span>Tidal020.wav</span></div>
<div class="fi" style="left:694px;top:166px"><svg><use href="#wav"/></svg><span>Tidal040.wav</span></div>
<div class="fi" style="left:694px;top:187px"><svg><use href="#wav"/></svg><span>VibratoEightSin.wav</span></div>
<div class="fi" style="left:694px;top:208px"><svg><use href="#wav"/></svg><span>VibratoFourSin.wav</span></div>
<div class="fi" style="left:694px;top:229px"><svg><use href="#wav"/></svg><span>Zero4Samples.wav</span></div>
<div class="fi" style="left:694px;top:250px"><svg><use href="#wav"/></svg><span>Zero8Samples.wav</span></div>
<div class="fi" style="left:694px;top:271px"><svg><use href="#wav"/></svg><span>Zero16Samples.wav</span></div>
<div class="fi" style="left:694px;top:292px"><svg><use href="#wav"/></svg><span>Zero32Samples.wav</span></div>
<div class="fi" style="left:694px;top:313px"><svg><use href="#wav"/></svg><span>Zero64Samples.wav</span></div>
<div class="fi" style="left:694px;top:334px"><svg><use href="#wav"/></svg><span>Zero128Samples.wav</span></div>
<div class="fi" style="left:694px;top:355px"><svg><use href="#wav"/></svg><span>Zero256Samples.wav</span></div>
<div class="t" style="left:138.4px;top:732.8px;font-size:12px;color:#111;letter-spacing:-0.35px">File name:</div>
<div class="a" style="left:197px;top:727px;width:619px;height:24px;border:1px solid #0067c0;border-bottom:2px solid #0067c0;background:#fff;border-radius:3px"></div>
<div class="a" style="left:201px;top:733px;width:1px;height:13px;background:#000"></div>
<svg class="a" style="left:800px;top:735px;width:12px;height:8px"><path d="M1.5 1.5L6 6L10.5 1.5" fill="none" stroke="#444" stroke-width="1.1"/></svg>
<div class="a" style="left:828.3px;top:727.2px;width:187.3px;height:22.3px;border:1px solid #dadada;border-bottom-color:#b8b8b8;background:#fdfdfd;border-radius:3px"></div>
<div class="t" style="left:832.4px;top:733.2px;font-size:12px;color:#111;letter-spacing:-0.31px">Wave Files (*.wav)</div>
<svg class="a" style="left:1001px;top:735px;width:12px;height:8px"><path d="M1.5 1.5L6 6L10.5 1.5" fill="none" stroke="#444" stroke-width="1.1"/></svg>
<div class="a" style="left:829px;top:757px;width:86px;height:24px;border:1px solid #0067c0;border-bottom:2px solid #0067c0;background:#fdfdfd;border-radius:4px"></div>
<div class="t" style="left:829px;top:763.1px;width:86px;text-align:center;font-size:12px;color:#111;letter-spacing:-0.5px">Open</div>
<div class="a" style="left:929px;top:757px;width:86px;height:24px;border:1px solid #d5d5d5;border-bottom-color:#bcbcbc;background:#fdfdfd;border-radius:4px"></div>
<div class="t" style="left:929px;top:763.1px;width:86px;text-align:center;font-size:12px;color:#111;letter-spacing:-0.4px">Cancel</div>
<svg class="a" style="left:1021px;top:782px;width:10px;height:10px"><g fill="#a8a8a8"><rect x="7" y="1" width="2" height="2"/><rect x="4" y="4" width="2" height="2"/><rect x="7" y="4" width="2" height="2"/><rect x="1" y="7" width="2" height="2"/><rect x="4" y="7" width="2" height="2"/><rect x="7" y="7" width="2" height="2"/></g></svg>
</body></html>
